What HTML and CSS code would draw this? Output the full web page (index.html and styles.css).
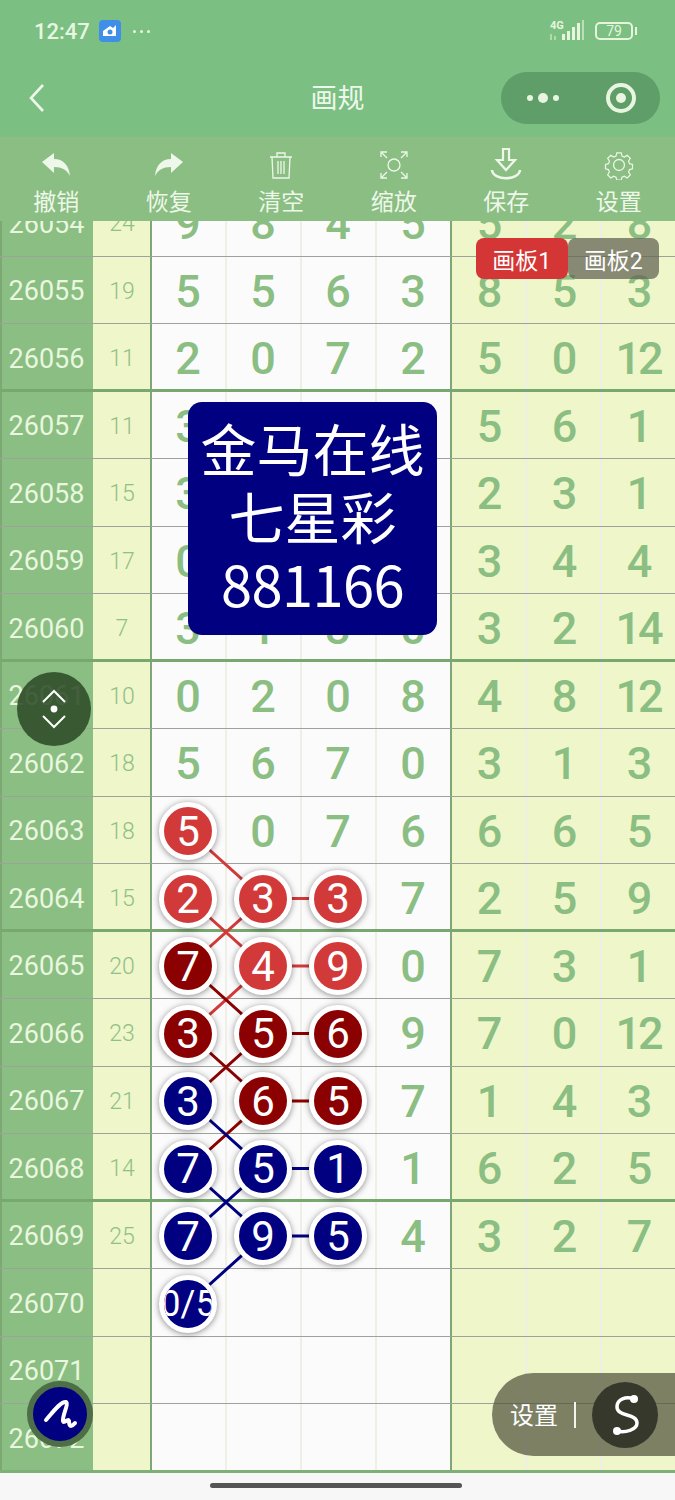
FILE: index.html

```html
<!DOCTYPE html>
<html lang="zh-CN">
<head>
  <meta charset="UTF-8" />
  <meta name="viewport" content="width=device-width, initial-scale=1.0" />
  <title>画规</title>
  <link rel="stylesheet" href="styles.css">
</head>
<body>
  <div class="app">
    <div class="status-bar">
      <div class="status-left">
        <span class="clock">12:47</span>
        <svg class="app-badge" viewBox="0 0 22 22">
          <rect width="22" height="22" rx="4" fill="#3f8fe8"/>
          <path d="M4 16v-5l7-5 3 2 3-3v11z" fill="#fff"/>
          <circle cx="11" cy="12" r="2.5" fill="#3f8fe8"/>
        </svg>
        <span class="status-dots"><i></i><i></i><i></i></span>
      </div>
      <div class="status-right">
        <svg class="signal" viewBox="0 0 38 24">
          <text x="1" y="10" class="signal-text">4G</text>
          <g fill="#e6f5dc">
            <rect x="1" y="15" width="2" height="6" opacity=".5"/>
            <rect x="5" y="17" width="2" height="4" opacity=".5"/>
            <rect x="13" y="15" width="3" height="6"/>
            <rect x="18" y="12" width="3" height="9"/>
            <rect x="23" y="8" width="3" height="13"/>
            <rect x="28" y="4" width="3" height="17"/>
            <rect x="33" y="1" width="2" height="20" opacity=".6"/>
          </g>
        </svg>
        <div class="battery"><span>79</span></div>
      </div>
    </div>

    <div class="nav-bar">
      <svg class="nav-back" viewBox="0 0 18 30"><path d="M15 2 3 15l12 13"/></svg>
      <div class="nav-title">画规</div>
      <div class="capsule">
        <span class="capsule-dots"><i></i><b></b><i></i></span>
        <span class="capsule-target"><i></i></span>
      </div>
    </div>

    <div class="toolbar">
      <div class="tool">
        <svg viewBox="0 0 30 30"><path class="solid" d="M1 12 13 3v6c9 0 15 6 16 17-3-6-8-9-16-9v6z"/></svg>
        <span>撤销</span>
      </div>
      <div class="tool">
        <svg viewBox="0 0 30 30"><path class="solid" d="M29 12 17 3v6C8 9 2 15 1 26c3-6 8-9 16-9v6z"/></svg>
        <span>恢复</span>
      </div>
      <div class="tool">
        <svg viewBox="0 0 30 30">
          <path d="M4 7h22M11 7V3h8v4M6 7l1 21h16l1-21M12 11v13M15 11v13M18 11v13"/>
        </svg>
        <span>清空</span>
      </div>
      <div class="tool">
        <svg viewBox="0 0 30 30">
          <circle cx="15" cy="15" r="6"/>
          <path d="M2 7V2h6M22 2h6v5M2 23v5h6M28 23v5h-6M3 3l5 5M27 3l-5 5M3 27l5-5M27 27l-5-5"/>
        </svg>
        <span>缩放</span>
      </div>
      <div class="tool">
        <svg class="save-icon" viewBox="0 0 34 34">
          <path d="M14 2h6v11h6l-9 10-9-10h6z"/>
          <path d="M3 23c1 11 27 11 28 0" stroke-width="2.6"/>
        </svg>
        <span>保存</span>
      </div>
      <div class="tool">
        <svg viewBox="0 0 30 30">
          <circle cx="15" cy="15" r="5.5"/>
          <path d="M12.5 1.5h5l.8 3.6 2.6 1.1 3.2-2 3.5 3.5-2 3.2 1.1 2.6 3.3.8v5l-3.3.8-1.1 2.6 2 3.2-3.5 3.5-3.2-2-2.6 1.1-.8 3.3h-5l-.8-3.3-2.6-1.1-3.2 2-3.5-3.5 2-3.2-1.1-2.6-3.3-.8v-5l3.3-.8 1.1-2.6-2-3.2 3.5-3.5 3.2 2 2.6-1.1z" transform="translate(1.5 1.5) scale(.9)"/>
        </svg>
        <span>设置</span>
      </div>
    </div>

    <div class="board">
      <div class="sheet">
        <div class="row"><div class="period">26054</div><div class="sum">24</div><div class="main"><span>9</span><span>8</span><span>4</span><span>5</span></div><div class="side"><span>5</span><span>2</span><span>8</span></div></div>
        <div class="row"><div class="period">26055</div><div class="sum">19</div><div class="main"><span>5</span><span>5</span><span>6</span><span>3</span></div><div class="side"><span>8</span><span>5</span><span>3</span></div></div>
        <div class="row"><div class="period">26056</div><div class="sum">11</div><div class="main"><span>2</span><span>0</span><span>7</span><span>2</span></div><div class="side"><span>5</span><span>0</span><span>12</span></div></div>
        <div class="row group"><div class="period">26057</div><div class="sum">11</div><div class="main"><span>3</span><span></span><span></span><span></span></div><div class="side"><span>5</span><span>6</span><span>1</span></div></div>
        <div class="row"><div class="period">26058</div><div class="sum">15</div><div class="main"><span>3</span><span></span><span></span><span></span></div><div class="side"><span>2</span><span>3</span><span>1</span></div></div>
        <div class="row"><div class="period">26059</div><div class="sum">17</div><div class="main"><span>0</span><span></span><span></span><span></span></div><div class="side"><span>3</span><span>4</span><span>4</span></div></div>
        <div class="row"><div class="period">26060</div><div class="sum">7</div><div class="main"><span>3</span><span>1</span><span>3</span><span>0</span></div><div class="side"><span>3</span><span>2</span><span>14</span></div></div>
        <div class="row group"><div class="period">26061</div><div class="sum">10</div><div class="main"><span>0</span><span>2</span><span>0</span><span>8</span></div><div class="side"><span>4</span><span>8</span><span>12</span></div></div>
        <div class="row"><div class="period">26062</div><div class="sum">18</div><div class="main"><span>5</span><span>6</span><span>7</span><span>0</span></div><div class="side"><span>3</span><span>1</span><span>3</span></div></div>
        <div class="row"><div class="period">26063</div><div class="sum">18</div><div class="main"><span><b class="ball red">5</b></span><span>0</span><span>7</span><span>6</span></div><div class="side"><span>6</span><span>6</span><span>5</span></div></div>
        <div class="row"><div class="period">26064</div><div class="sum">15</div><div class="main"><span><b class="ball red">2</b></span><span><b class="ball red">3</b></span><span><b class="ball red">3</b></span><span>7</span></div><div class="side"><span>2</span><span>5</span><span>9</span></div></div>
        <div class="row group"><div class="period">26065</div><div class="sum">20</div><div class="main"><span><b class="ball dark">7</b></span><span><b class="ball red">4</b></span><span><b class="ball red">9</b></span><span>0</span></div><div class="side"><span>7</span><span>3</span><span>1</span></div></div>
        <div class="row"><div class="period">26066</div><div class="sum">23</div><div class="main"><span><b class="ball dark">3</b></span><span><b class="ball dark">5</b></span><span><b class="ball dark">6</b></span><span>9</span></div><div class="side"><span>7</span><span>0</span><span>12</span></div></div>
        <div class="row"><div class="period">26067</div><div class="sum">21</div><div class="main"><span><b class="ball navy">3</b></span><span><b class="ball dark">6</b></span><span><b class="ball dark">5</b></span><span>7</span></div><div class="side"><span>1</span><span>4</span><span>3</span></div></div>
        <div class="row"><div class="period">26068</div><div class="sum">14</div><div class="main"><span><b class="ball navy">7</b></span><span><b class="ball navy">5</b></span><span><b class="ball navy">1</b></span><span>1</span></div><div class="side"><span>6</span><span>2</span><span>5</span></div></div>
        <div class="row group"><div class="period">26069</div><div class="sum">25</div><div class="main"><span><b class="ball navy">7</b></span><span><b class="ball navy">9</b></span><span><b class="ball navy">5</b></span><span>4</span></div><div class="side"><span>3</span><span>2</span><span>7</span></div></div>
        <div class="row"><div class="period">26070</div><div class="sum"></div><div class="main"><span><b class="ball navy wide">0/5</b></span><span></span><span></span><span></span></div><div class="side"><span></span><span></span><span></span></div></div>
        <div class="row"><div class="period">26071</div><div class="sum"></div><div class="main"><span></span><span></span><span></span><span></span></div><div class="side"><span></span><span></span><span></span></div></div>
        <div class="row"><div class="period">26072</div><div class="sum"></div><div class="main"><span></span><span></span><span></span><span></span></div><div class="side"><span></span><span></span><span></span></div></div>

        <!-- links between the balls, drawn in sheet coordinates -->
        <svg class="links" viewBox="0 0 675 1282">
          <g transform="translate(.5 0)">
            <path stroke="#d23a3a" d="M188 642 263 709.500M263 709.500H338M188 709.500 263 777M263 709.500 188 777M263 777H338M263 777 188 844.500"/>
            <path stroke="#8b0000" d="M188 777 263 844.500M188 844.500 263 912M263 844.500H338M263 844.500 188 912M263 912H338M263 912 188 979.500"/>
            <path stroke="#000080" d="M188 912 263 979.500M263 979.500H338M188 979.500 263 1047M263 979.500 188 1047M263 1047H338M263 1047 188 1114.500"/>
          </g>
        </svg>
      </div>

      <div class="board-tabs">
        <div class="board-tab active">画板1</div>
        <div class="board-tab">画板2</div>
      </div>

      <div class="lottery-card">
        <div>金马在线</div>
        <div>七星彩</div>
        <div class="lottery-code">881166</div>
      </div>

      <div class="scroll-btn">
        <svg viewBox="0 0 74 74">
          <path d="M26 30 37 19l11 11M26 44l11 11 11-11"/>
          <circle cx="37" cy="37" r="2.4"/>
        </svg>
      </div>

      <div class="pen-btn">
        <svg viewBox="0 0 54 54">
          <path d="M13 33C20 25 28 14 33 15c3 2-4 14-3 19 1 3 5-3 6 0 0 3 1 5 2 5 2 0 3-2 4-3"/>
        </svg>
      </div>

      <div class="settings-pill">
        <span class="pill-label">设置</span>
        <span class="pill-sep"></span>
        <div class="pill-logo">
          <svg viewBox="0 0 66 66">
            <path d="M42 17c-8-3-17 0-17 8 0 10 20 6 20 16 0 7-12 10-20 8"/>
            <circle cx="42" cy="17" r="4"/>
            <circle cx="25" cy="49" r="4"/>
          </svg>
        </div>
      </div>
    </div>

    <div class="home-area"><div class="home-bar"></div></div>
  </div>
</body>
</html>
```

FILE: styles.css

```css
body {
  margin: 0;
  font-family: 'Roboto', 'Noto Sans CJK SC', sans-serif;
  background: #f7f7f7;
}
.app {
  width: 675px;
  height: 1500px;
  display: flex;
  flex-direction: column;
  overflow: hidden;
}

/* status bar */
.status-bar {
  height: 62px;
  flex: none;
  background: #7bbf83;
  display: flex;
  justify-content: space-between;
  align-items: center;
  padding: 0 42px 0 34px;
  color: #e8f6e0;
}
.status-left {
  display: flex;
  align-items: center;
}
.clock {
  font-size: 22px;
  font-weight: 500;
  width: 65px;
}
.app-badge {
  width: 22px;
  height: 22px;
}
.status-dots {
  display: flex;
  gap: 4px;
  margin-left: 12px;
}
.status-dots i {
  width: 3px;
  height: 3px;
  border-radius: 50%;
  background: #e8f6e0;
}
.status-right {
  display: flex;
  align-items: center;
  gap: 8px;
}
.signal {
  width: 38px;
  height: 24px;
}
.signal-text {
  font-size: 11px;
  font-weight: 700;
  fill: #e6f5dc;
}
.battery {
  width: 38px;
  height: 18px;
  border: 2px solid #e6f5dc;
  border-radius: 5px;
  box-sizing: border-box;
  font-size: 14px;
  line-height: 14px;
  text-align: center;
  position: relative;
  color: #e6f5dc;
}
.battery::after {
  content: "";
  position: absolute;
  right: -6px;
  top: 3px;
  width: 2px;
  height: 8px;
  background: #e6f5dc;
}

/* title bar */
.nav-bar {
  height: 75px;
  flex: none;
  background: #7bbf83;
  display: flex;
  align-items: center;
  justify-content: center;
  position: relative;
  border-bottom: 1px solid #83bb80;
  box-sizing: border-box;
}
.nav-back {
  position: absolute;
  left: 28px;
  top: 21px;
  width: 18px;
  height: 30px;
  fill: none;
  stroke: #eef8ea;
  stroke-width: 2.6;
}
.nav-title {
  font-size: 27px;
  color: #eef8ea;
  margin-top: -5px;
}
.capsule {
  position: absolute;
  right: 15px;
  top: 10px;
  width: 159px;
  height: 52px;
  border-radius: 26px;
  background: #5f9d69;
  display: flex;
  align-items: center;
  justify-content: space-between;
  padding: 0 24px 0 26px;
  box-sizing: border-box;
}
.capsule-dots {
  display: flex;
  align-items: center;
  gap: 5px;
}
.capsule-dots i {
  width: 6px;
  height: 6px;
  border-radius: 50%;
  background: #e8f6e0;
}
.capsule-dots b {
  width: 10px;
  height: 10px;
  border-radius: 50%;
  background: #e8f6e0;
}
.capsule-target {
  width: 30px;
  height: 30px;
  border: 4px solid #e8f6e0;
  border-radius: 50%;
  box-sizing: border-box;
  display: flex;
  align-items: center;
  justify-content: center;
}
.capsule-target i {
  width: 10px;
  height: 10px;
  border-radius: 50%;
  background: #e8f6e0;
}

/* tools */
.toolbar {
  height: 84px;
  flex: none;
  background: #8bbe82;
  display: grid;
  grid-template-columns: repeat(6, 1fr);
  position: relative;
  z-index: 2;
}
.tool {
  display: flex;
  flex-direction: column;
  align-items: center;
  color: #eef8ea;
  font-size: 23px;
  line-height: 30px;
  padding-top: 13px;
}
.tool svg {
  width: 30px;
  height: 30px;
  margin-bottom: 8px;
  fill: none;
  stroke: #eef8ea;
  stroke-width: 1.3;
}
.tool svg .solid {
  fill: #eef8ea;
  stroke: none;
}
.tool .save-icon {
  width: 34px;
  height: 34px;
  margin: -3px 0 7px;
  stroke-width: 2.2;
}

/* number sheet */
.board {
  height: 1249px;
  flex: none;
  position: relative;
  overflow: hidden;
  border-bottom: 3px solid #7fae78;
}
.sheet {
  position: relative;
  margin-top: -32px;
}
.row {
  display: grid;
  grid-template-columns: 93px 58px 300px 224px;
  height: 67.5px;
  box-sizing: border-box;
  border-bottom: 1px solid #9da39a;
}
.row.group {
  box-shadow: 0 -3px 0 #78a870;
  position: relative;
}
.period {
  background: #8bbe82;
  box-shadow: inset 2px 0 0 #7ba873;
  color: #e9f7df;
  font-size: 27px;
  display: flex;
  align-items: center;
  justify-content: center;
  padding-top: 3px;
}
.sum {
  background: #eff6c9;
  color: #8fc088;
  font-size: 23px;
  font-weight: 300;
  display: flex;
  align-items: center;
  justify-content: center;
  padding-top: 3px;
}
.main, .side {
  display: grid;
  box-shadow: inset 1px 0 0 #7fa677, -1px 0 0 #7fa677;
  font-size: 45px;
  font-weight: 500;
  color: #8bbe82;
  position: relative;
}
.main {
  grid-template-columns: repeat(4, 75px);
  background: #fbfbfb;
}
.side {
  grid-template-columns: repeat(3, 75px);
  background: #eff6c9;
  letter-spacing: -3px;
}
.main span, .side span {
  display: flex;
  align-items: center;
  justify-content: center;
  padding-top: 3px;
  border-right: 2px solid #efefe8;
  margin-right: -1px;
}

.links {
  position: absolute;
  left: 0;
  top: 0;
  width: 675px;
  height: 1282px;
  stroke-width: 3;
  fill: none;
  z-index: 1;
}
.ball {
  width: 48px;
  height: 48px;
  border: 5px solid #fff;
  border-radius: 50%;
  box-shadow: 0 1px 6px rgba(0, 0, 0, .45);
  color: #fff;
  font-size: 42px;
  font-weight: 400;
  display: flex;
  align-items: center;
  justify-content: center;
  flex: none;
  overflow: hidden;
  position: relative;
  z-index: 2;
}
.ball.red { background: #d23a3a; }
.ball.dark { background: #8b0000; }
.ball.navy { background: #000080; }
.ball.wide { font-size: 36px; white-space: nowrap; }

/* things floating over the sheet */
.board-tabs {
  position: absolute;
  left: 476px;
  top: 17px;
  display: flex;
  z-index: 3;
}
.board-tab {
  width: 91.5px;
  height: 41px;
  padding-top: 6px;
  box-sizing: border-box;
  border-radius: 8px;
  background: rgba(100, 100, 85, .75);
  color: #fff;
  font-size: 23px;
  line-height: 35px;
  text-align: center;
}
.board-tab.active {
  background: #d43535;
}
.lottery-card {
  position: absolute;
  left: 188px;
  top: 181px;
  width: 249px;
  height: 233px;
  padding: 11px 0;
  box-sizing: border-box;
  background: #000080;
  border-radius: 14px;
  color: #fff;
  font-size: 56px;
  line-height: 68px;
  text-align: center;
  font-family: 'Noto Sans CJK SC', sans-serif;
  z-index: 3;
}
.lottery-code {
  letter-spacing: -.6px;
}
.scroll-btn {
  position: absolute;
  left: 17px;
  top: 451px;
  width: 74px;
  height: 74px;
  border-radius: 50%;
  background: rgba(45, 75, 40, .88);
  z-index: 3;
}
.scroll-btn svg {
  width: 74px;
  height: 74px;
  fill: #fff;
  stroke: #fff;
  stroke-width: 2;
}
.scroll-btn svg path {
  fill: none;
}
.pen-btn {
  position: absolute;
  left: 27px;
  top: 1160px;
  width: 54px;
  height: 54px;
  border: 6px solid #4d6e47;
  border-radius: 50%;
  background: #000080;
  z-index: 3;
}
.pen-btn svg {
  width: 54px;
  height: 54px;
  fill: none;
  stroke: #fff;
  stroke-width: 4;
  stroke-linecap: round;
  stroke-linejoin: round;
}
.settings-pill {
  position: absolute;
  right: 0;
  top: 1152px;
  width: 183px;
  height: 83px;
  border-radius: 42px 0 0 42px;
  background: rgba(80, 82, 60, .72);
  display: flex;
  align-items: center;
  padding-left: 18px;
  box-sizing: border-box;
  color: #fff;
  z-index: 3;
}
.pill-label {
  font-size: 24px;
  margin-top: -3px;
}
.pill-sep {
  width: 2px;
  height: 26px;
  margin: 0 16px;
  background: #f4f4ea;
}
.pill-logo {
  width: 66px;
  height: 66px;
  border-radius: 50%;
  background: #35382b;
}
.pill-logo svg {
  width: 66px;
  height: 66px;
  fill: #fff;
  stroke: none;
}
.pill-logo svg path {
  fill: none;
  stroke: #fff;
  stroke-width: 3.5;
  stroke-linecap: round;
}

.home-area {
  flex: 1;
  background: #f7f7f7;
  display: flex;
  justify-content: center;
  padding-top: 10px;
}
.home-bar {
  width: 252px;
  height: 5px;
  margin-right: 4px;
  border-radius: 3px;
  background: #555;
}
```
